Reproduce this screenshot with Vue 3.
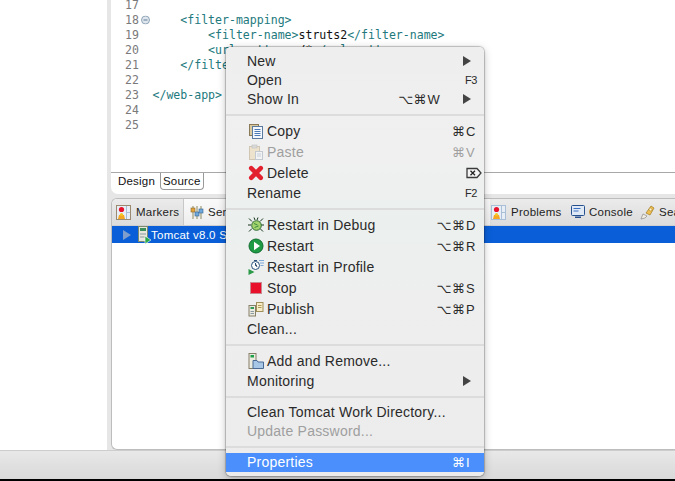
<script setup>
const code = [
  { n: 17, parts: [] },
  { n: 18, fold: true, parts: [['t', '    <filter-mapping>']] },
  { n: 19, parts: [['t', '        <filter-name>'], ['b', 'struts2'], ['t', '</filter-name>']] },
  { n: 20, parts: [['t', '        <url-pattern>'], ['b', '/*'], ['t', '</url-pattern>']] },
  { n: 21, parts: [['t', '    </filter-mapping>']] },
  { n: 22, parts: [] },
  { n: 23, parts: [['t', '</web-app>']] },
  { n: 24, parts: [] },
  { n: 25, parts: [] }
]
const sections = [
  [
    { label: 'New', arrow: true },
    { label: 'Open', fkey: 'F3' },
    { label: 'Show In', mods: '⌥⌘', letter: 'W', arrow: true }
  ],
  [
    { label: 'Copy', icon: 'copy', mods: '⌘', letter: 'C' },
    { label: 'Paste', icon: 'paste', mods: '⌘', letter: 'V', disabled: true },
    { label: 'Delete', icon: 'delete', del: true },
    { label: 'Rename', fkey: 'F2' }
  ],
  [
    { label: 'Restart in Debug', icon: 'debug', mods: '⌥⌘', letter: 'D' },
    { label: 'Restart', icon: 'run', mods: '⌥⌘', letter: 'R' },
    { label: 'Restart in Profile', icon: 'profile' },
    { label: 'Stop', icon: 'stop', mods: '⌥⌘', letter: 'S' },
    { label: 'Publish', icon: 'publish', mods: '⌥⌘', letter: 'P' },
    { label: 'Clean...' }
  ],
  [
    { label: 'Add and Remove...', icon: 'add' },
    { label: 'Monitoring', arrow: true }
  ],
  [
    { label: 'Clean Tomcat Work Directory...' },
    { label: 'Update Password...', disabled: true }
  ],
  [
    { label: 'Properties', mods: '⌘', letter: 'I', active: true }
  ]
]
</script>

<template>
  <div class="screen">
    <div class="workspace">
      <div class="side"></div>
      <div class="gutter"></div>
      <div class="main">
        <section class="editor">
          <div class="code">
            <div v-for="line in code" :key="line.n" class="line">
              <span class="num">{{ line.n }}</span>
              <span class="fold">
                <svg v-if="line.fold" width="9" height="9" viewBox="0 0 9 9">
                  <circle cx="4.500" cy="4.500" r="4" fill="#dfe6ee" stroke="#8fa5b8" />
                  <path d="M2.500 4.500h4" stroke="#5f7f9a" />
                </svg>
              </span>
              <span class="src"><span v-for="(p, i) in line.parts" :key="i" :class="p[0] === 't' ? 'tag' : 'plain'">{{ p[1] }}</span></span>
            </div>
          </div>
          <div class="editor-tabs">
            <span class="etab selected">Design</span>
            <span class="etab">Source</span>
          </div>
        </section>
        <section class="lower">
          <div class="viewtabs">
            <div class="vtab markers">
              <svg width="15" height="15" viewBox="0 0 15 15">
                <rect x="0.500" y="0.500" width="14" height="14" fill="#e8eef6" stroke="#9a8a70" />
                <path d="M10.500 1v13M11 7.500h3" stroke="#a9bfd8" />
                <circle cx="5.500" cy="4.500" r="2.600" fill="#e8112d" />
                <path d="M2 14l1-4h5l1 4z" fill="#f5a623" />
                <circle cx="5.500" cy="9.500" r="1.600" fill="#f5c623" />
              </svg>
              <span>Markers</span>
            </div>
            <div class="vtab servers">
              <svg width="14" height="15" viewBox="0 0 14 15">
                <path d="M3 1v13M7 1v13M11 1v13" stroke="#8a8a60" />
                <rect x="1" y="3" width="4" height="4" fill="#e3a33a" stroke="#8a6a30" stroke-width=".6" />
                <rect x="5" y="7" width="4" height="4" fill="#6fa8dc" stroke="#35648f" stroke-width=".6" />
                <rect x="9" y="4" width="4" height="4" fill="#6fa8dc" stroke="#35648f" stroke-width=".6" />
              </svg>
              <span>Servers</span>
            </div>
            <div class="vtab problems">
              <svg width="15" height="15" viewBox="0 0 15 15">
                <rect x="0.500" y="0.500" width="14" height="14" fill="#e8eef6" stroke="#a9bfd8" />
                <path d="M10.500 1v13M11 7.500h3" stroke="#a9bfd8" />
                <circle cx="5.500" cy="4.500" r="2.600" fill="#e8112d" />
                <path d="M2 14l1-4h5l1 4z" fill="#f5a623" />
                <circle cx="5.500" cy="9.500" r="1.600" fill="#f5c623" />
              </svg>
              <span>Problems</span>
            </div>
            <div class="vtab console">
              <svg width="14" height="14" viewBox="0 0 14 14">
                <rect x="0.500" y="0.500" width="13" height="10" rx="1" fill="#dfe8f5" stroke="#27508f" />
                <path d="M2.500 3.500h7M2.500 6h5" stroke="#3a6fc0" />
                <path d="M4 11.500h6v1.500H4z" fill="#27508f" />
              </svg>
              <span>Console</span>
            </div>
            <div class="vtab search">
              <svg width="15" height="15" viewBox="0 0 15 15">
                <path d="M6 8l5-7 3 2-4 7z" fill="#f0c050" stroke="#a07820" stroke-width=".7" />
                <circle cx="10.500" cy="4.500" r="1.400" fill="#fdf3c8" stroke="#a07820" stroke-width=".5" />
                <path d="M1 14l2-5 4 2-2 2z" fill="#f3efe2" stroke="#8a8a8a" stroke-width=".7" />
              </svg>
              <span>Search</span>
            </div>
          </div>
          <div class="tree-row">
            <span class="twist"></span>
            <svg class="srv" width="14" height="18" viewBox="0 0 14 18">
              <rect x="1.500" y="0.500" width="9" height="15" fill="#e6e6dc" stroke="#7a8a70" />
              <rect x="3" y="2" width="6" height="3" fill="#3a8f5a" />
              <path d="M3 8h6M3 11h6" stroke="#8a9aa0" />
              <path d="M8 10l6 4-6 4z" fill="#2aa84a" stroke="#fff" stroke-width=".6" />
            </svg>
            <span class="tree-text">Tomcat v8.0 Server at localhost</span>
          </div>
        </section>
      </div>
    </div>
    <div class="bottombar"></div>

    <div class="menu">
      <template v-for="(sec, si) in sections" :key="si">
        <div v-if="si" class="sep"></div>
        <div
          v-for="item in sec"
          :key="item.label"
          class="item"
          :class="{ tall: item.icon, off: item.disabled, on: item.active }"
        >
          <span v-if="item.icon" class="ico">
            <svg v-if="item.icon === 'copy'" width="16" height="16" viewBox="0 0 16 16">
              <rect x="1.500" y="1.500" width="9" height="11" fill="#d9c9a0" stroke="#8a7a58" />
              <rect x="4.500" y="3.500" width="10" height="12" fill="#f4f7fb" stroke="#5a7aa0" />
              <path d="M6.500 6.500h6M6.500 8.500h6M6.500 10.500h6M6.500 12.500h6" stroke="#4a7ab8" />
            </svg>
            <svg v-else-if="item.icon === 'paste'" width="16" height="16" viewBox="0 0 16 16" opacity=".55">
              <rect x="1.500" y="2.500" width="10" height="13" fill="#ecd9b0" stroke="#b8a582" />
              <rect x="4" y="1" width="5" height="3" fill="#c8c8c8" stroke="#999" stroke-width=".6" />
              <rect x="7.500" y="7.500" width="7" height="8" fill="#f6f6f6" stroke="#a0aab8" />
              <path d="M9 10h4M9 12h4" stroke="#a0b4cc" />
            </svg>
            <svg v-else-if="item.icon === 'delete'" width="16" height="16" viewBox="0 0 16 16">
              <path d="M3.200 3.200l9.600 9.600M12.800 3.200l-9.600 9.600" stroke="#e3202e" stroke-width="4.500" stroke-linecap="round" />
            </svg>
            <svg v-else-if="item.icon === 'debug'" width="16" height="16" viewBox="0 0 16 16">
              <path d="M1 1.500l3 3M15 1.500l-3 3M0 8h3M13 8h3M1 14.500l3-3M15 14.500l-3-3M6 .500l1 2.500M10 .500L9 3" stroke="#16321c" stroke-width="1" />
              <ellipse cx="8.500" cy="8.500" rx="4.800" ry="4.800" fill="#a3d46e" stroke="#2f6a34" />
              <path d="M6 6.500l3.500 1.500M6.500 10.500l4-1.500" stroke="#3e8a40" />
            </svg>
            <svg v-else-if="item.icon === 'run'" width="16" height="16" viewBox="0 0 16 16">
              <circle cx="8" cy="8" r="7" fill="#1f9a45" stroke="#0f6d2e" />
              <path d="M6 3.800l6 4.200-6 4.200z" fill="#fff" />
            </svg>
            <svg v-else-if="item.icon === 'profile'" width="16" height="16" viewBox="0 0 16 16">
              <circle cx="7.500" cy="6.500" r="4" fill="#fff" stroke="#2b4f7a" />
              <path d="M7.500 4V6.500l1.800 1.200M6 1.500h3" stroke="#2b4f7a" />
              <path d="M11 1.500h5M12 4h4M12.500 6.500h3" stroke="#7fa7d8" />
              <path d="M.500 10l6 3-6 3z" fill="#2a9a48" />
            </svg>
            <svg v-else-if="item.icon === 'stop'" width="16" height="16" viewBox="0 0 16 16">
              <rect x="2.500" y="2.500" width="11" height="11" fill="#e8102a" stroke="#c88a90" />
            </svg>
            <svg v-else-if="item.icon === 'publish'" width="16" height="16" viewBox="0 0 16 16">
              <rect x="1" y="4.500" width="6.500" height="10.500" fill="#ecebdf" stroke="#857f68" />
              <rect x="2.500" y="6" width="3.500" height="2" fill="#2f9a55" />
              <path d="M2.500 10.500h3.500M2.500 12.500h3.500" stroke="#8a9aa0" />
              <rect x="8.500" y="1.500" width="6.500" height="9" fill="#f6ecc8" stroke="#a08f58" />
              <path d="M10 4.500h3.500M10 6.500h3.500" stroke="#b09a58" />
            </svg>
            <svg v-else-if="item.icon === 'add'" width="16" height="16" viewBox="0 0 16 16">
              <rect x="1" y="0.500" width="7" height="15" fill="#ecebdf" stroke="#857f68" />
              <rect x="2.500" y="2" width="3.500" height="2.500" fill="#1fa04a" />
              <path d="M5 7.500h4l1 1.500h5.500v6.500H5z" fill="#a8c6e6" stroke="#4a6a94" />
            </svg>
          </span>
          <span class="label">{{ item.label }}</span>
          <span class="fill"></span>
          <span v-if="item.fkey" class="fkey">{{ item.fkey }}</span>
          <span v-if="item.mods" class="key" :class="{ shifted: item.arrow }"><span class="mods">{{ item.mods }}</span><span class="letter">{{ item.letter }}</span></span>
          <svg v-if="item.del" class="del" width="16" height="12" viewBox="0 0 16 12">
            <path d="M1 1.500h10l4 4.500-4 4.500H1z" fill="#f4f4f4" stroke="#3a3a3a" stroke-width="1.300" />
            <path d="M4.500 3.800l4.500 4.400M9 3.800L4.500 8.200" stroke="#222" stroke-width="1.300" />
          </svg>
          <span v-if="item.arrow" class="arrow"></span>
        </div>
      </template>
    </div>
  </div>
</template>

<style scoped>
.screen {
  position: relative;
  width: 675px;
  height: 481px;
  overflow: hidden;
  display: flex;
  flex-direction: column;
  background: #000;
  font-family: "Liberation Sans", Arial, sans-serif;
}
.workspace {
  height: 450px;
  display: flex;
  background: #e8e8e8;
}
.side {
  width: 107px;
  background: #fff;
}
.gutter {
  width: 4px;
  background: #e6e6e6;
}
.main {
  flex: 1;
  min-width: 0;
  display: flex;
  flex-direction: column;
  gap: 4px;
  background: #e6e6e6;
}
.editor {
  height: 194px;
  background: #fff;
  border-bottom-left-radius: 7px;
  display: flex;
  flex-direction: column;
  overflow: hidden;
}
.code {
  height: 173px;
  box-sizing: border-box;
  border-bottom: 1px solid #a8a8a8;
  overflow: hidden;
  font-family: "DejaVu Sans Mono", monospace;
  font-size: 11.55px;
  line-height: 15px;
}
.line {
  display: flex;
  height: 15px;
  white-space: pre;
  transform: translateY(-2.500px);
}
.num {
  width: 28px;
  text-align: right;
  color: #7a7a7a;
}
.fold {
  width: 13.500px;
  display: flex;
  align-items: center;
  padding-left: 2px;
  box-sizing: border-box;
}
.tag {
  color: #22797d;
}
.plain {
  color: #111;
}
.editor-tabs {
  display: flex;
  padding-left: 3px;
  height: 17px;
  font-size: 11.5px;
  letter-spacing: 0.2px;
  color: #111;
}
.etab {
  box-sizing: border-box;
  padding: 1px 3px 0 4px;
  height: 17px;
  line-height: 15px;
}
.etab.selected {
  width: 46px;
  background: #fff;
}
.etab + .etab {
  width: 44px;
  padding-left: 2px;
  border: 1px solid #9a9a9a;
  border-top: 0;
  border-radius: 0 0 4px 4px;
}
.lower {
  height: 252px;
  background: #fff;
  border: 1px solid #bdbdbd;
  border-right: 0;
  border-radius: 6px 0 0 6px;
  box-sizing: border-box;
  overflow: hidden;
}
.viewtabs {
  height: 27px;
  display: flex;
  align-items: center;
  background: linear-gradient(#ebebeb, #dcdcdc);
  border-bottom: 1px solid #cfcfcf;
  box-sizing: border-box;
  font-size: 11.5px;
  letter-spacing: 0.25px;
  color: #1d1d1d;
}
.vtab {
  flex: none;
  display: flex;
  align-items: center;
  gap: 5px;
  height: 100%;
  box-sizing: border-box;
  white-space: nowrap;
}
.markers {
  width: 72px;
  padding-left: 4px;
  border-right: 1px solid #c8c8c8;
}
.servers {
  width: 306px;
  padding-left: 6px;
  gap: 4px;
  background: linear-gradient(#fafafa, #ededed);
}
.problems {
  width: 80px;
  padding-left: 1px;
}
.console {
  width: 69px;
  padding-left: 1px;
  gap: 4px;
}
.search {
  padding-left: 1px;
  gap: 4px;
}
.tree-row {
  height: 17px;
  display: flex;
  align-items: center;
  background: #0a5fd8;
  color: #fff;
  font-size: 11.5px;
  letter-spacing: 0.25px;
}
.twist {
  width: 0;
  height: 0;
  margin-left: 11px;
  border-left: 8px solid #7f9ecb;
  border-top: 5px solid transparent;
  border-bottom: 5px solid transparent;
}
.srv {
  margin-left: 6px;
}
.tree-text {
  white-space: nowrap;
}
.bottombar {
  height: 29px;
  background: linear-gradient(#e8e8e8, #d9d9d9);
  border-top: 1px solid #cdcdcd;
  box-sizing: border-box;
}
.menu {
  position: absolute;
  left: 226px;
  top: 47px;
  width: 258px;
  height: 429px;
  box-sizing: border-box;
  padding: 5px 0 4px;
  background: linear-gradient(#eeeeee 0, #f0f0f0 25%, #ebf0ee 40%, #eeeeee 60%, #ececec 100%);
  border-radius: 5px;
  box-shadow: 0 0 1px 1px rgba(0, 0, 0, 0.22), 0 2px 8px rgba(0, 0, 0, 0.25);
  font-size: 14px;
  letter-spacing: 0.22px;
  color: #2a2a2a;
}
.sep {
  height: 2px;
  margin: 5px 0;
  background: #dcdcdc;
}
.item {
  height: 19px;
  box-sizing: border-box;
  padding: 0 9px 1px 21px;
  display: flex;
  align-items: center;
  white-space: nowrap;
}
.item.tall {
  height: 21px;
}
.ico {
  width: 20px;
  margin-left: 1px;
  margin-right: -1px;
  display: flex;
  align-items: center;
}
.fill {
  flex: 1;
}
.off {
  color: #9f9f9f;
}
.on {
  background: #4a8ffb;
  color: #fff;
}
.fkey {
  font-size: 11px;
  letter-spacing: -0.4px;
  margin-right: -2px;
}
.key {
  display: flex;
  margin-right: -1px;
  font-family: "Liberation Sans", "DejaVu Sans", sans-serif;
  font-size: 13px;
  letter-spacing: 0.2px;
}
.letter {
  min-width: 10px;
  margin-left: 1px;
}
.shifted {
  margin-right: 23px;
}
.arrow {
  width: 0;
  height: 0;
  margin-right: 4px;
  border-left: 8px solid #444;
  border-top: 5px solid transparent;
  border-bottom: 5px solid transparent;
}
.del {
  margin-right: -7px;
}
</style>
